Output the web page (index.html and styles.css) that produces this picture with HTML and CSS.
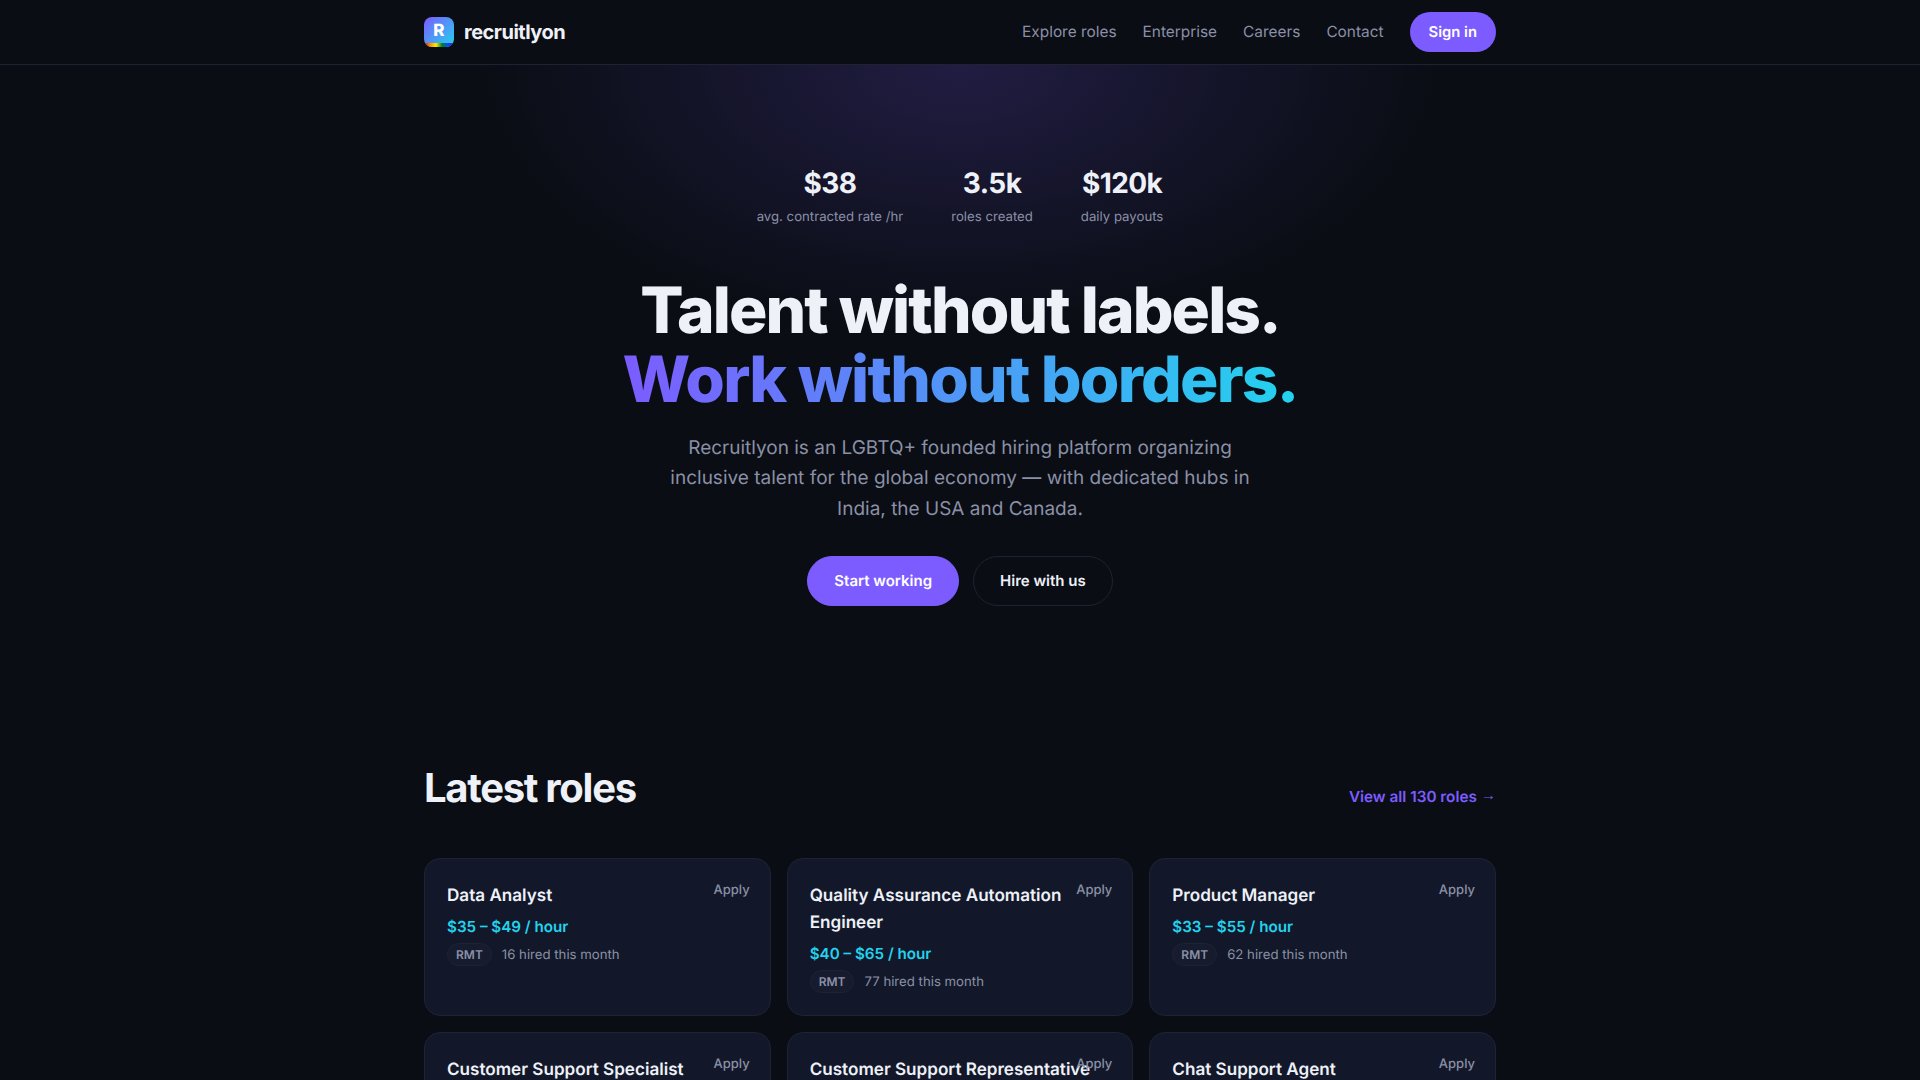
FILE: index.html
```html
<!DOCTYPE html>
<html lang="en">
<head>
<meta charset="utf-8">
<title>Recruitlyon</title>
<link rel="stylesheet" href="styles.css">
</head>
<body>
<header class="topbar">
  <div class="wrap topbar-inner">
    <a class="brand" href="#"><span class="brand-mark"><span class="brand-r">R</span></span><span class="brand-name">recruitlyon</span></a>
    <nav class="nav">
      <a class="nav-link" href="#">Explore roles</a>
      <a class="nav-link" href="#">Enterprise</a>
      <a class="nav-link" href="#">Careers</a>
      <a class="nav-link" href="#">Contact</a>
      <a class="signin" href="#">Sign in</a>
    </nav>
  </div>
</header>
<main>
  <section class="hero">
    <div class="stats">
      <div class="stat"><div class="stat-value">$38</div><div class="stat-label">avg. contracted rate /hr</div></div>
      <div class="stat"><div class="stat-value">3.5k</div><div class="stat-label">roles created</div></div>
      <div class="stat"><div class="stat-value">$120k</div><div class="stat-label">daily payouts</div></div>
    </div>
    <h1 class="headline">Talent without labels.<br><span class="gradient">Work without borders.</span></h1>
    <p class="lede">Recruitlyon is an LGBTQ+ founded hiring platform organizing inclusive talent for the global economy — with dedicated hubs in India, the USA and Canada.</p>
    <div class="cta">
      <a class="btn btn-primary" href="#">Start working</a>
      <a class="btn btn-ghost" href="#">Hire with us</a>
    </div>
  </section>
  <section class="wrap roles">
    <div class="roles-head">
      <h2>Latest roles</h2>
      <a class="view-all" href="#">View all 130 roles <span class="arrow">→</span></a>
    </div>
    <div class="grid">
      <article class="card"><a class="apply" href="#">Apply</a><h3>Data Analyst</h3><div class="pay">$35 – $49 / hour</div><div class="meta"><span class="tag">RMT</span><span class="hired">16 hired this month</span></div></article>
      <article class="card"><a class="apply" href="#">Apply</a><h3>Quality Assurance Automation Engineer</h3><div class="pay">$40 – $65 / hour</div><div class="meta"><span class="tag">RMT</span><span class="hired">77 hired this month</span></div></article>
      <article class="card"><a class="apply" href="#">Apply</a><h3>Product Manager</h3><div class="pay">$33 – $55 / hour</div><div class="meta"><span class="tag">RMT</span><span class="hired">62 hired this month</span></div></article>
      <article class="card"><a class="apply" href="#">Apply</a><h3>Customer Support Specialist</h3></article>
      <article class="card"><a class="apply" href="#">Apply</a><h3>Customer Support Representative</h3></article>
      <article class="card"><a class="apply" href="#">Apply</a><h3>Chat Support Agent</h3></article>
    </div>
  </section>
</main>
</body>
</html>
```
FILE: styles.css
```css
* { box-sizing: border-box; }
html, body { margin: 0; padding: 0; }
body {
  background: #0a0d14;
  color: #eef1f8;
  font-family: Inter, "Liberation Sans", sans-serif;
  text-rendering: geometricPrecision;
  height: 1080px;
  overflow: hidden;
}
a { color: inherit; text-decoration: none; }
.wrap { width: 1072px; margin: 0 auto; }
.topbar { height: 65px; border-bottom: 1px solid #1e2333; }
.topbar-inner { height: 64px; display: flex; align-items: center; justify-content: space-between; }
.brand { display: flex; align-items: center; gap: 10px; }
.brand-mark {
  width: 30px; height: 30px; border-radius: 8px; position: relative; overflow: hidden;
  display: flex; align-items: center; justify-content: center;
  background: linear-gradient(135deg, #7c5cff, #22d3ee);
}
.brand-mark::after {
  content: ""; position: absolute; left: 0; right: 0; bottom: 0; height: 4px;
  background: linear-gradient(90deg, #e40303, #ff8c00, #ffed00, #008026, #004dff, #750787);
}
.brand-r { color: #fff; font-weight: 800; font-size: 17px; line-height: 1; margin-top: -2px; }
.brand-name { font-weight: 700; font-size: 20px; letter-spacing: -0.5px; }
.nav { display: flex; align-items: center; gap: 26px; font-size: 15.4px; color: #8a90a6; }
.nav-link { padding-bottom: 2px; }
.signin { background: #7c5cff; color: #fff; font-weight: 600; font-size: 14.8px; padding: 0 19px; height: 40px; display: flex; align-items: center; border-radius: 999px; }
.hero {
  height: 635px;
  padding-top: 101px;
  display: flex; flex-direction: column; align-items: center;
  background: radial-gradient(480px 270px at 50% 0, rgba(124, 92, 255, 0.2), rgba(124, 92, 255, 0) 100%);
}
.stats { display: flex; gap: 48px; }
.stat { text-align: center; }
.stat-value { font-size: 28px; font-weight: 700; line-height: 34px; letter-spacing: -0.56px; }
.stat-label { font-size: 13.2px; color: #8a90a6; line-height: 20px; margin-top: 7px; }
.headline { margin: 49px 0 0; text-align: center; font-size: 64px; line-height: 69px; font-weight: 800; letter-spacing: -1.92px; }
.gradient { background: linear-gradient(90deg, #7c5cff, #22d3ee); -webkit-background-clip: text; background-clip: text; color: transparent; letter-spacing: -1.78px; }
.lede { width: 600px; margin: 19px 0 0; text-align: center; font-size: 19px; line-height: 30.4px; color: #8a90a6; }
.cta { display: flex; gap: 14px; margin-top: 32px; }
.btn { height: 50px; display: flex; align-items: center; border-radius: 999px; font-size: 15px; font-weight: 600; padding: 0 26px 2px; border: 1px solid transparent; }
.btn-primary { background: #7c5cff; border-color: #7c5cff; color: #fff; }
.btn-ghost { border-color: #1e2333; color: #eef1f8; }
.roles { padding-top: 64px; }
.roles-head { display: flex; align-items: flex-end; justify-content: space-between; margin-bottom: 46px; }
.roles-head h2 { margin: 0; font-size: 40px; line-height: 48px; font-weight: 700; letter-spacing: -1.3px; }
.view-all { color: #7c5cff; font-size: 15.3px; font-weight: 600; line-height: 24px; margin-bottom: 3px; }
.arrow { font-family: "Liberation Sans", sans-serif; font-weight: 400; vertical-align: 2px; }
.grid { display: grid; grid-template-columns: repeat(3, 1fr); gap: 16px; }
.card { position: relative; background: #121829; border: 1px solid #1e2333; border-radius: 16px; padding: 23px 22px 22px; height: 157.6px; }
.card h3 { margin: 0; font-size: 17.1px; line-height: 27px; font-weight: 600; }
.apply { position: absolute; top: 21px; right: 20px; font-size: 13px; line-height: 20px; color: #8a90a6; font-weight: 500; }
.pay { color: #22d3ee; font-size: 15.2px; line-height: 24px; font-weight: 600; margin-top: 6px; }
.meta { display: flex; align-items: center; gap: 10px; margin-top: 4px; }
.tag { border: 1px solid #1e2333; background: #161c2e; border-radius: 999px; font-size: 12px; font-weight: 600; color: #8a90a6; padding: 0 8px; line-height: 21px; }
.hired { font-size: 13.2px; color: #8a90a6; }
```
